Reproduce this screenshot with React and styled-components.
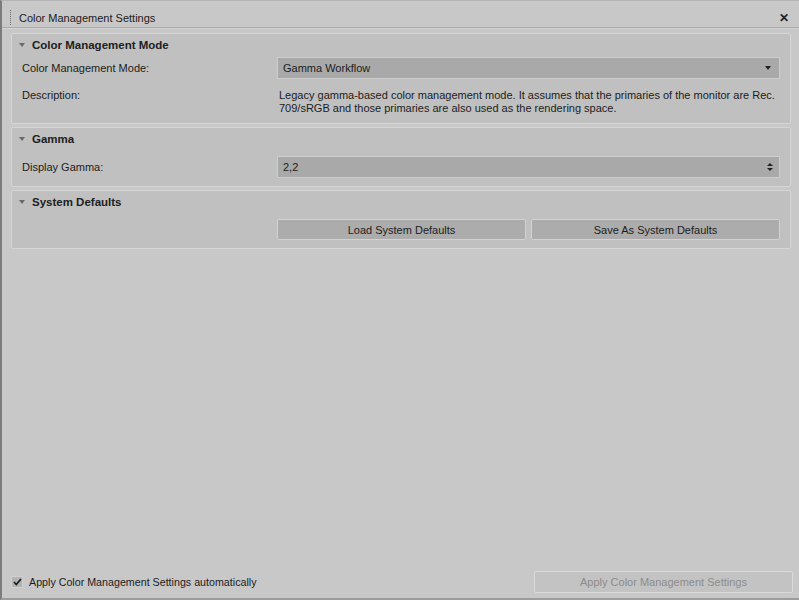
import React from 'react';
import styled, { createGlobalStyle } from 'styled-components';

const GlobalStyle = createGlobalStyle`
  html, body {
    margin: 0;
    padding: 0;
    background: #c8c8c8;
  }
  body {
    font-family: "Liberation Sans", Arial, sans-serif;
    font-size: 11px;
    color: #1c1c1c;
  }
`;

const Window = styled.div`
  box-sizing: border-box;
  width: 799px;
  height: 600px;
  display: flex;
  flex-direction: column;
  background: #c8c8c8;
  border-left: 2px solid #7c7c7c;
  border-top: 1px solid #b4b4b4;
  border-bottom: 2px solid #9c9c9c;
`;

const TitleBar = styled.div`
  box-sizing: border-box;
  height: 27px;
  display: flex;
  align-items: center;
  padding: 7px 10px 0 8px;
  border-bottom: 1px solid #a9a9a9;
  box-shadow: 0 1px 0 #d4d4d4;
`;

const Grip = styled.div`
  width: 1px;
  height: 16px;
  margin-right: 8px;
  background: repeating-linear-gradient(
    to bottom,
    #6c6c6c 0,
    #6c6c6c 1px,
    transparent 1px,
    transparent 2px
  );
`;

const Title = styled.div`
  flex: 1;
  font-size: 11px;
`;

const Close = styled.div`
  font-size: 12px;
  font-weight: bold;
  line-height: 1;
  color: #222;
`;

const Content = styled.div`
  flex: 1;
  display: flex;
  flex-direction: column;
  gap: 3px;
  padding: 5px 8px 0 9px;
`;

const Panel = styled.section`
  background: #c0c0c0;
  border: 1px solid #d6d6d6;
  border-radius: 2px;
`;

const PanelHeader = styled.div`
  height: 21px;
  display: flex;
  align-items: center;
  padding-left: 7px;
  font-weight: bold;
  font-size: 11.5px;
  color: #202020;
`;

const Caret = styled.span`
  width: 0;
  height: 0;
  border-left: 3px solid transparent;
  border-right: 3px solid transparent;
  border-top: 4px solid #6a6a6a;
  margin-right: 7px;
`;

const PanelBody = styled.div`
  display: flex;
  flex-direction: column;
  gap: 10px;
  padding: ${(p) => (p.$tight ? '2px' : '7px')} 10px 8px 10px;
`;

const Row = styled.div`
  display: grid;
  grid-template-columns: 255px 1fr;
  align-items: ${(p) => (p.$top ? 'start' : 'center')};
`;

const Label = styled.div`
  line-height: 13px;
`;

const Field = styled.div`
  box-sizing: border-box;
  height: 22px;
  display: flex;
  align-items: center;
  justify-content: space-between;
  padding: 0 6px 0 5px;
  background: #a9a9a9;
  border: 1px solid #cdcdcd;
`;

const DownArrow = styled.span`
  width: 0;
  height: 0;
  border-left: 3px solid transparent;
  border-right: 3px solid transparent;
  border-top: 4px solid #222;
  margin-right: 2px;
`;

const Spinner = styled.span`
  display: flex;
  flex-direction: column;
  gap: 2px;
  &::before,
  &::after {
    content: '';
    width: 0;
    height: 0;
    border-left: 3px solid transparent;
    border-right: 3px solid transparent;
  }
  &::before {
    border-bottom: 3px solid #222;
  }
  &::after {
    border-top: 3px solid #222;
  }
`;

const Text = styled.div`
  line-height: 13px;
  padding-left: 2px;
`;

const Buttons = styled.div`
  display: grid;
  grid-template-columns: 1fr 1fr;
  gap: 5px;
`;

const Button = styled.button`
  box-sizing: border-box;
  height: 21px;
  font-family: inherit;
  font-size: 11px;
  color: ${(p) => (p.disabled ? '#8c8c8c' : '#1c1c1c')};
  background: ${(p) => (p.disabled ? '#c3c3c3' : '#acacac')};
  border: 1px solid ${(p) => (p.disabled ? '#dadada' : '#d2d2d2')};
  border-radius: 2px;
  padding: 0;
`;

const Footer = styled.div`
  height: 32px;
  display: flex;
  align-items: center;
  justify-content: space-between;
  padding: 0 6px 0 9px;
`;

const CheckLabel = styled.label`
  display: flex;
  align-items: center;
  gap: 6px;
  font-size: 10.7px;
`;

const Box = styled.span`
  box-sizing: border-box;
  width: 12px;
  height: 12px;
  display: flex;
  align-items: center;
  justify-content: center;
  background: #b3b3b3;
  border: 1px solid #d0d0d0;
`;

const ApplyButton = styled(Button)`
  width: 259px;
  height: 22px;
`;

export default function App() {
  return (
    <>
      <GlobalStyle />
      <Window>
        <TitleBar>
          <Grip />
          <Title>Color Management Settings</Title>
          <Close>✕</Close>
        </TitleBar>
        <Content>
          <Panel>
            <PanelHeader>
              <Caret />
              Color Management Mode
            </PanelHeader>
            <PanelBody $tight>
              <Row>
                <Label>Color Management Mode:</Label>
                <Field>
                  <span>Gamma Workflow</span>
                  <DownArrow />
                </Field>
              </Row>
              <Row $top>
                <Label>Description:</Label>
                <Text>
                  Legacy gamma-based color management mode. It assumes that the primaries of the monitor are Rec.
                  <br />
                  709/sRGB and those primaries are also used as the rendering space.
                </Text>
              </Row>
            </PanelBody>
          </Panel>
          <Panel>
            <PanelHeader>
              <Caret />
              Gamma
            </PanelHeader>
            <PanelBody>
              <Row>
                <Label>Display Gamma:</Label>
                <Field>
                  <span>2,2</span>
                  <Spinner />
                </Field>
              </Row>
            </PanelBody>
          </Panel>
          <Panel>
            <PanelHeader>
              <Caret />
              System Defaults
            </PanelHeader>
            <PanelBody>
              <Row>
                <span />
                <Buttons>
                  <Button>Load System Defaults</Button>
                  <Button>Save As System Defaults</Button>
                </Buttons>
              </Row>
            </PanelBody>
          </Panel>
        </Content>
        <Footer>
          <CheckLabel>
            <Box>
              <svg width="9" height="8" viewBox="0 0 9 8">
                <path d="M1 4 L3.3 6.5 L8 1" fill="none" stroke="#1e1e1e" strokeWidth="1.8" />
              </svg>
            </Box>
            Apply Color Management Settings automatically
          </CheckLabel>
          <ApplyButton disabled>Apply Color Management Settings</ApplyButton>
        </Footer>
      </Window>
    </>
  );
}
